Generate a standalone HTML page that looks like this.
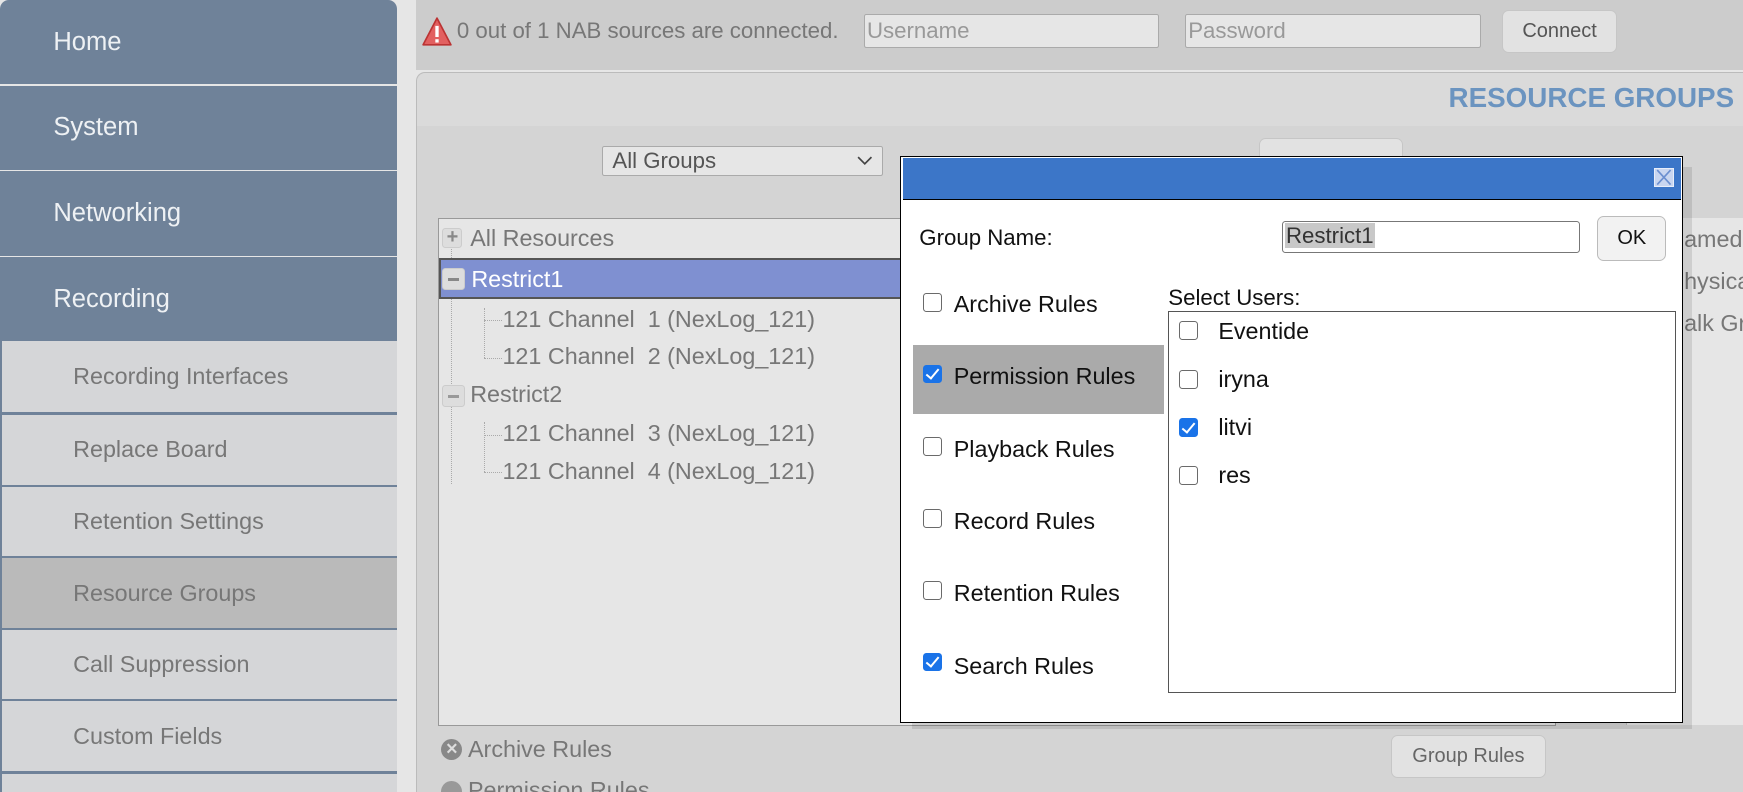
<!DOCTYPE html>
<html><head><meta charset="utf-8"><style>
*{box-sizing:border-box;margin:0;padding:0}
html,body{width:1743px;height:792px;overflow:hidden;background:#e6e6e6}
#w{position:relative;width:1568px;height:713px;zoom:1.11161;font-family:"Liberation Sans",Arial,sans-serif;overflow:hidden;background:#e6e6e6}
.a{position:absolute}
.nav{position:absolute;left:0;width:357px;background:#6f8299;color:#eef1f4;font-size:23px;padding-left:48px;display:flex;align-items:center}
.sub{position:absolute;left:0;width:357px;background:#d5d6d8;color:#777;font-size:21px;padding-left:64px;display:flex;align-items:center;border-left:2px solid #6f8299}
.ln{position:absolute;left:0;width:357px;height:2px;background:#6f8299}
.t{position:absolute;font-size:21px;color:#777;white-space:nowrap}
.cb{position:absolute;width:17px;height:17px;border:1.3px solid #6a6a6a;border-radius:3px;background:#fff}
.cb.on{background:#1a73e8;border-color:#1a73e8}
.cb.on::after{content:"";position:absolute;left:4.5px;top:0.5px;width:4.5px;height:10px;border:solid #fff;border-width:0 2.5px 2.5px 0;transform:rotate(40deg)}
.dl{position:absolute;font-size:21px;color:#111;white-space:nowrap}
</style></head><body><div id="w">
<!-- sidebar -->
<div class="nav" style="top:0;height:76px;border-radius:8px 8px 0 0">Home</div>
<div class="nav" style="top:77px;height:76px">System</div>
<div class="nav" style="top:154px;height:76px">Networking</div>
<div class="nav" style="top:231px;height:76px">Recording</div>
<div class="sub" style="top:307px;height:64px">Recording Interfaces</div>
<div class="ln" style="top:371px"></div>
<div class="sub" style="top:373px;height:63px">Replace Board</div>
<div class="ln" style="top:436px"></div>
<div class="sub" style="top:438px;height:62px">Retention Settings</div>
<div class="ln" style="top:500px"></div>
<div class="sub" style="top:502px;height:63px;background:#bababa">Resource Groups</div>
<div class="ln" style="top:565px"></div>
<div class="sub" style="top:567px;height:62px">Call Suppression</div>
<div class="ln" style="top:629px"></div>
<div class="sub" style="top:631px;height:63px">Custom Fields</div>
<div class="ln" style="top:694px"></div>
<div class="sub" style="top:696px;height:20px"></div>
<!-- top bar -->
<div class="a" style="left:374px;top:0;width:1194px;height:63px;background:#cccccc"></div>
<svg class="a" style="left:380px;top:15px" width="27" height="26" viewBox="0 0 27 26"><path d="M13.5 1 L26 25 L1 25 Z" fill="#e26060" stroke="#b33" stroke-width="1.5" stroke-linejoin="round"/><rect x="12" y="8" width="3" height="10" fill="#fff"/><rect x="12" y="20" width="3" height="3" fill="#fff"/></svg>
<div class="t" style="left:411px;top:16px;font-size:20px">0 out of 1 NAB sources are connected.</div>
<div class="a" style="left:777px;top:13px;width:266px;height:30px;background:#e6e6e6;border:1px solid #aaa;border-radius:2px;color:#999;font-size:20px;padding:2px 2px">Username</div>
<div class="a" style="left:1066px;top:13px;width:266px;height:30px;background:#e6e6e6;border:1px solid #aaa;border-radius:2px;color:#999;font-size:20px;padding:2px 2px">Password</div>
<div class="a" style="left:1351px;top:9px;width:104px;height:39px;background:#e2e2e2;border:1px solid #c6c6c6;border-radius:6px;color:#555;font-size:18px;text-align:center;line-height:37px">Connect</div>
<!-- content -->
<div class="a" style="left:374px;top:65px;width:1194px;height:650px;background:#d4d4d4;border-radius:8px 0 0 0;border-top:1px solid #bbb;border-left:1px solid #bbb"></div>
<div class="a" style="left:375px;top:66px;width:1193px;height:47px;background:#dadada;border-radius:8px 0 0 0"></div>
<div class="a" style="right:8px;top:74px;font-size:25px;font-weight:bold;color:#6b94c0">RESOURCE GROUPS</div>
<div class="a" style="left:542px;top:131px;width:252px;height:27px;background:#e6e6e6;border:1px solid #aaa;border-radius:2px;font-size:20px;color:#555;padding:1px 8px">All Groups<svg style="position:absolute;right:8px;top:8px" width="14" height="9"><path d="M1 1 L7 7 L13 1" stroke="#444" stroke-width="1.5" fill="none"/></svg></div>
<div class="a" style="left:1133px;top:124px;width:129px;height:40px;background:#e2e2e2;border:1px solid #c6c6c6;border-radius:6px"></div>
<!-- tree -->
<div class="a" style="left:394px;top:196px;width:1006px;height:457px;background:#e6e6e6;border:1px solid #999"></div>
<div class="a" style="left:1463px;top:196px;width:105px;height:456px;background:#e6e6e6;border-left:1px solid #bbb"></div>
<div class="t" style="left:1515px;top:203px">amed</div>
<div class="t" style="left:1515px;top:241px">hysica</div>
<div class="t" style="left:1515px;top:279px">alk Gr</div>
<div class="a" style="left:406px;top:205px;height:230px;border-left:1px dotted #aaa"></div>
<div class="a" style="left:398px;top:205px;width:18px;height:18px;background:#ddd;border:1px solid #ccc;border-radius:3px;color:#888;font-size:18px;line-height:15px;text-align:center;font-weight:bold">+</div>
<div class="t" style="left:423px;top:202px">All Resources</div>
<div class="a" style="left:395px;top:232px;width:1005px;height:37px;background:#7f90d1;border:2px solid #555;border-right:none"></div>
<div class="a" style="left:398px;top:241px;width:20px;height:20px;background:#ddd;border:1px solid #ccc;border-radius:3px"><div style="position:absolute;left:4px;top:8px;width:10px;height:3px;background:#888"></div></div>
<div class="t" style="left:424px;top:239px;color:#fff">Restrict1</div>
<div class="a" style="left:435px;top:277px;height:45px;border-left:1px dotted #aaa"></div>
<div class="a" style="left:435px;top:288px;width:17px;border-top:1px dotted #aaa"></div>
<div class="a" style="left:435px;top:322px;width:17px;border-top:1px dotted #aaa"></div>
<div class="t" style="left:452px;top:275px">121 Channel&nbsp; 1 (NexLog_121)</div>
<div class="t" style="left:452px;top:309px">121 Channel&nbsp; 2 (NexLog_121)</div>
<div class="a" style="left:398px;top:346px;width:20px;height:20px;background:#ddd;border:1px solid #ccc;border-radius:3px"><div style="position:absolute;left:4px;top:8px;width:10px;height:3px;background:#999"></div></div>
<div class="t" style="left:423px;top:343px">Restrict2</div>
<div class="a" style="left:435px;top:380px;height:45px;border-left:1px dotted #aaa"></div>
<div class="a" style="left:435px;top:391px;width:17px;border-top:1px dotted #aaa"></div>
<div class="a" style="left:435px;top:425px;width:17px;border-top:1px dotted #aaa"></div>
<div class="t" style="left:452px;top:378px">121 Channel&nbsp; 3 (NexLog_121)</div>
<div class="t" style="left:452px;top:412px">121 Channel&nbsp; 4 (NexLog_121)</div>
<!-- below -->
<div class="a" style="left:397px;top:665px;width:19px;height:19px;border-radius:50%;background:#888;color:#ddd;font-size:14px;font-weight:bold;text-align:center;line-height:19px">✕</div>
<div class="t" style="left:421px;top:662px">Archive Rules</div>
<div class="a" style="left:397px;top:703px;width:19px;height:19px;border-radius:50%;background:#999"></div>
<div class="t" style="left:421px;top:699px">Permission Rules</div>
<div class="a" style="left:1251px;top:661px;width:140px;height:39px;background:#e2e2e2;border:1px solid #c6c6c6;border-radius:6px;color:#666;font-size:18px;text-align:center;line-height:37px">Group Rules</div>
<!-- dialog -->
<div class="a" style="left:820px;top:150px;width:702px;height:506px;background:rgba(0,0,0,0.1)"></div>
<div class="a" style="left:810px;top:140px;width:704px;height:510px;background:#fff;border:1px solid #000"></div>
<div class="a" style="left:812px;top:142px;width:700px;height:38px;background:#3c76c8;border-bottom:1px solid #000"></div>
<div class="a" style="left:1488px;top:151px;width:18px;height:17px;background:#c9d6f0;border:1px solid #e8eefa"><svg width="16" height="15" style="display:block"><path d="M2 1 L14 14 M14 1 L2 14" stroke="#6b8fd0" stroke-width="1.5"/></svg></div>
<div class="dl" style="left:827px;top:202px;font-size:20px">Group Name:</div>
<div class="a" style="left:1153px;top:199px;width:268px;height:29px;border:1px solid #777;border-radius:3px;padding:1px 2px"><span style="background:#c8c8c8;font-size:20px;color:#333;padding:0 1px">Restrict1</span></div>
<div class="a" style="left:1437px;top:194px;width:62px;height:41px;background:#f2f2f2;border:1px solid #bbb;border-radius:6px;font-size:18px;text-align:center;line-height:39px;color:#111">OK</div>
<div class="a" style="left:821px;top:310px;width:226px;height:62px;background:#aaaaaa"></div>
<div class="cb" style="left:830px;top:264px"></div><div class="dl" style="left:858px;top:262px">Archive Rules</div>
<div class="cb on" style="left:830px;top:328px"></div><div class="dl" style="left:858px;top:327px">Permission Rules</div>
<div class="cb" style="left:830px;top:393px"></div><div class="dl" style="left:858px;top:392px">Playback Rules</div>
<div class="cb" style="left:830px;top:458px"></div><div class="dl" style="left:858px;top:457px">Record Rules</div>
<div class="cb" style="left:830px;top:523px"></div><div class="dl" style="left:858px;top:522px">Retention Rules</div>
<div class="cb on" style="left:830px;top:587px"></div><div class="dl" style="left:858px;top:587px">Search Rules</div>
<div class="dl" style="left:1051px;top:256px;font-size:20px">Select Users:</div>
<div class="a" style="left:1051px;top:280px;width:457px;height:343px;border:1px solid #555"></div>
<div class="cb" style="left:1061px;top:289px"></div><div class="dl" style="left:1096px;top:286px">Eventide</div>
<div class="cb" style="left:1061px;top:333px"></div><div class="dl" style="left:1096px;top:329px">iryna</div>
<div class="cb on" style="left:1061px;top:376px"></div><div class="dl" style="left:1096px;top:372px">litvi</div>
<div class="cb" style="left:1061px;top:419px"></div><div class="dl" style="left:1096px;top:416px">res</div>
</div></body></html>
